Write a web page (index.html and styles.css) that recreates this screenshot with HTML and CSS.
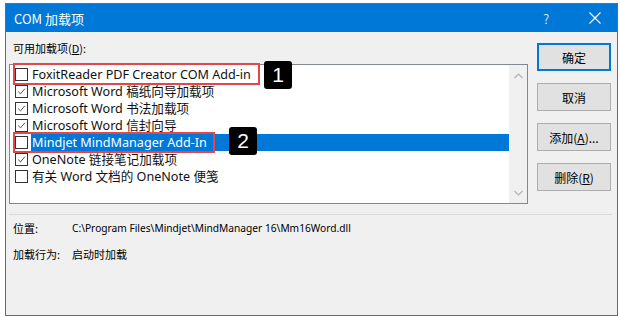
FILE: index.html
```html
<!DOCTYPE html>
<html lang="zh-CN">
<head>
<meta charset="utf-8">
<title>COM 加载项</title>
<link rel="stylesheet" href="styles.css">
</head>
<body>
<div class="window">
  <div class="titlebar">
    <span class="title">COM 加载项</span>
    <span class="help">?</span>
    <svg class="close" width="12" height="12" viewBox="0 0 12 12"><path d="M0.5 0.5 L11.5 11.5 M11.5 0.5 L0.5 11.5" stroke="#fff" stroke-width="1.1" fill="none"/></svg>
  </div>
  <div class="main">
    <div class="leftcol">
      <div class="label">可用加载项(<u>D</u>):</div>
      <div class="listbox">
        <div class="items">
          <div class="row"><span class="cb"></span><span class="txt">FoxitReader PDF Creator COM Add-in</span></div>
          <div class="row"><span class="cb on"><svg viewBox="0 0 13 13"><path d="M2.5 6.5 L5.3 9.3 L10.5 3.2" stroke="#444" stroke-width="1.1" fill="none"/></svg></span><span class="txt">Microsoft Word 稿纸向导加载项</span></div>
          <div class="row"><span class="cb on"><svg viewBox="0 0 13 13"><path d="M2.5 6.5 L5.3 9.3 L10.5 3.2" stroke="#444" stroke-width="1.1" fill="none"/></svg></span><span class="txt">Microsoft Word 书法加载项</span></div>
          <div class="row"><span class="cb on"><svg viewBox="0 0 13 13"><path d="M2.5 6.5 L5.3 9.3 L10.5 3.2" stroke="#444" stroke-width="1.1" fill="none"/></svg></span><span class="txt">Microsoft Word 信封向导</span></div>
          <div class="row sel"><span class="cb"></span><span class="txt">Mindjet MindManager Add-In</span></div>
          <div class="row"><span class="cb on"><svg viewBox="0 0 13 13"><path d="M2.5 6.5 L5.3 9.3 L10.5 3.2" stroke="#444" stroke-width="1.1" fill="none"/></svg></span><span class="txt">OneNote 链接笔记加载项</span></div>
          <div class="row"><span class="cb"></span><span class="txt">有关 Word 文档的 OneNote 便笺</span></div>
        </div>
        <div class="scrollbar">
          <svg width="9" height="6" viewBox="0 0 9 6"><path d="M0.5 5 L4.5 1 L8.5 5" stroke="#b4b4b4" stroke-width="1.2" fill="none"/></svg>
          <svg width="9" height="6" viewBox="0 0 9 6"><path d="M0.5 1 L4.5 5 L8.5 1" stroke="#b4b4b4" stroke-width="1.2" fill="none"/></svg>
        </div>
        <div class="mark mark1"></div>
        <div class="badge badge1">1</div>
        <div class="mark mark2"></div>
        <div class="badge badge2">2</div>
      </div>
    </div>
    <div class="buttons">
      <div class="btn default">确定</div>
      <div class="btn">取消</div>
      <div class="btn">添加(<u>A</u>)...</div>
      <div class="btn">删除(<u>R</u>)</div>
    </div>
  </div>
  <div class="sep"></div>
  <div class="info">
    <div class="inforow"><span class="key">位置:</span><span class="val">C:\Program Files\Mindjet\MindManager 16\Mm16Word.dll</span></div>
    <div class="inforow"><span class="key">加载行为:</span><span class="val cjk">启动时加载</span></div>
  </div>
</div>
</body>
</html>
```

FILE: styles.css
```css
html, body {
  margin: 0;
  padding: 0;
  background: #ffffff;
}
body {
  padding: 3px 0 0 5px;
  font-family: "Noto Sans", "Noto Sans CJK SC", sans-serif;
  color: #000;
}
.window {
  width: 611px;
  height: 311px;
  border: 1px solid #1a7fd4;
  background: #f0f0f0;
  display: flex;
  flex-direction: column;
}
.titlebar {
  height: 28px;
  background: #0078d7;
  color: #fff;
  display: flex;
  align-items: center;
  padding-left: 8px;
  font-family: "Noto Sans CJK SC", sans-serif;
  font-size: 13px;
}
.title {
  flex: 1;
}
.help {
  font-size: 13px;
  font-weight: 300;
  margin-right: 40px;
}
.close {
  margin-right: 16px;
}
.main {
  display: flex;
  align-items: flex-start;
  padding-left: 3px;
}
.leftcol {
  padding-top: 8px;
}
.label {
  font-family: "Noto Sans CJK SC", sans-serif;
  font-size: 11px;
  line-height: 16px;
  height: 16px;
  padding-left: 4px;
  margin-bottom: 8px;
}
.listbox {
  position: relative;
  width: 517px;
  height: 138px;
  border: 1px solid #828790;
  background: #fff;
  display: flex;
}
.items {
  flex: 1;
  padding-top: 1px;
}
.row {
  height: 17px;
  display: flex;
  align-items: center;
  font-family: "Noto Sans", "Noto Sans CJK SC", sans-serif;
  font-size: 12.6px;
  color: #111;
}
.cb {
  width: 11px;
  height: 11px;
  border: 1px solid #333;
  background: #fff;
  margin-left: 5px;
  margin-right: 3px;
  flex: none;
  display: flex;
}
.cb svg {
  width: 11px;
  height: 11px;
}
.txt {
  flex: 1;
  height: 17px;
  line-height: 17px;
  padding-left: 1px;
  white-space: nowrap;
}
.sel .txt {
  background: #0078d7;
  color: #fff;
}
.scrollbar {
  width: 18px;
  background: #f0f0f0;
  display: flex;
  flex-direction: column;
  justify-content: space-between;
  align-items: center;
  padding: 8px 0 7px;
  box-sizing: border-box;
}
.mark {
  position: absolute;
  border: 2px solid #e2474c;
  box-sizing: border-box;
}
.mark1 {
  left: 3px;
  top: -2px;
  width: 247px;
  height: 22px;
}
.mark2 {
  left: 3px;
  top: 67px;
  width: 202px;
  height: 21px;
}
.badge {
  position: absolute;
  width: 28px;
  height: 28px;
  background: #000;
  color: #fff;
  border-radius: 3px;
  font-family: "Liberation Sans", Arial, sans-serif;
  font-size: 21px;
  display: flex;
  align-items: center;
  justify-content: center;
}
.badge1 {
  left: 254px;
  top: -4px;
}
.badge2 {
  left: 219px;
  top: 62px;
}
.buttons {
  margin-left: 9px;
  padding-top: 11px;
  display: flex;
  flex-direction: column;
  gap: 12px;
}
.btn {
  width: 72px;
  height: 26px;
  border: 1px solid #adadad;
  background: #e1e1e1;
  font-family: "Noto Sans CJK SC", sans-serif;
  font-size: 12px;
  display: flex;
  align-items: center;
  justify-content: center;
}
.btn.default {
  width: 70px;
  height: 24px;
  border: 2px solid #0078d7;
}
.sep {
  margin: 10px 5px 0 3px;
  height: 1px;
  background: #dadada;
}
.info {
  padding-left: 7px;
  padding-top: 0;
  font-family: "Noto Sans CJK SC", sans-serif;
  font-size: 11px;
}
.inforow {
  display: flex;
  height: 26px;
  align-items: center;
}
.key {
  width: 59px;
}
.val {
  font-family: "Noto Sans", "Noto Sans CJK SC", sans-serif;
  font-size: 10.2px;
}
.val.cjk {
  font-family: "Noto Sans CJK SC", sans-serif;
  font-size: 11px;
}
```
